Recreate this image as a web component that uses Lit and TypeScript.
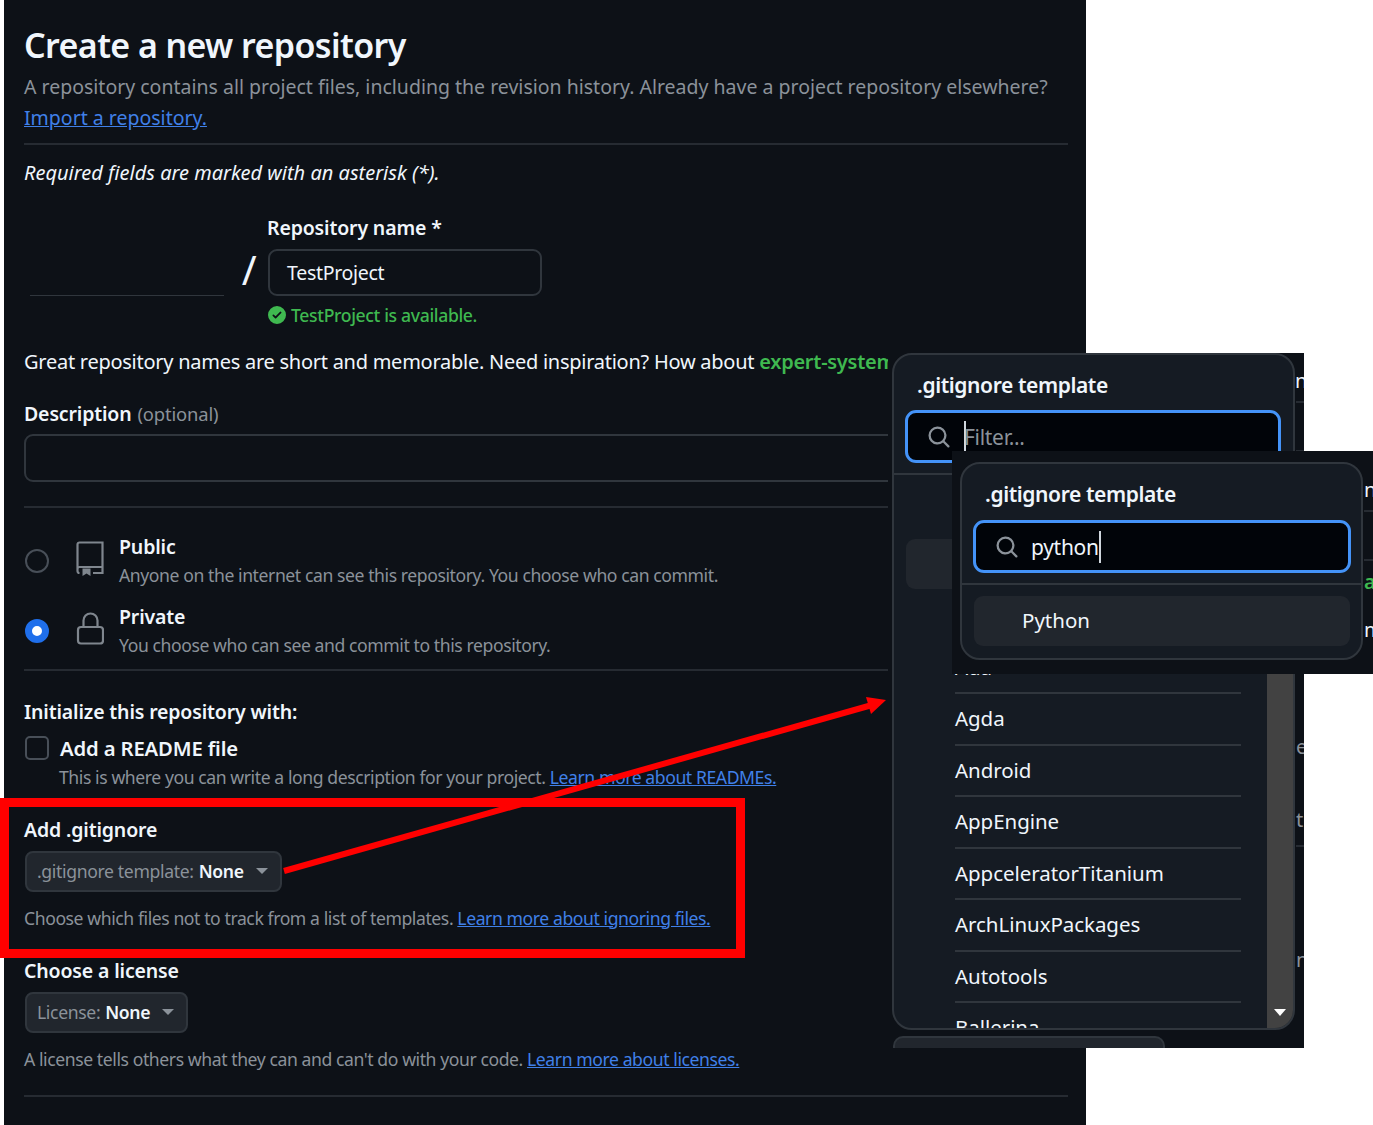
import { LitElement, html, css, svg } from "lit";
import { customElement } from "lit/decorators.js";

const searchIcon = html`<svg class="search" viewBox="0 0 16 16"><path fill="currentColor" d="M10.68 11.74a6 6 0 0 1-7.922-8.982 6 6 0 0 1 8.982 7.922l3.04 3.04a.749.749 0 0 1-.326 1.275.749.749 0 0 1-.734-.215ZM11.5 7a4.499 4.499 0 1 0-8.997 0A4.499 4.499 0 0 0 11.5 7Z"/></svg>`;
const items = ["", "", "Ada", "Agda", "Android", "AppEngine", "AppceleratorTitanium", "ArchLinuxPackages", "Autotools", "Ballerina"];

@customElement("app-root")
export class AppRoot extends LitElement {
  static styles = css`
    :host { display: block; position: relative; width: 1373px; height: 1125px; overflow: hidden; background: #fff;
      font-family: "Noto Sans", "Open Sans", sans-serif; color: #f0f6fc; font-size: 19px; letter-spacing: -0.35px; }
    * { box-sizing: border-box; }
    a { color: #4080e8; text-decoration: underline; }
    .main { margin-left: 4px; width: 1082px; height: 1125px; background: #0d1117; padding: 25px 18px 0 20px; overflow: hidden; }
    h1 { margin: 0; font-size: 34px; line-height: 40px; font-weight: 600; letter-spacing: -0.6px; }
    .lead { margin: 5.5px 0 0; font-size: 19.5px; line-height: 31px; color: #8b929a; white-space: nowrap; letter-spacing: 0; }
    hr { border: 0; height: 2px; background: #262b32; margin: 0; }
    .req { margin: 14px 0 0; line-height: 28px; font-style: italic; font-size: 20px; letter-spacing: 0; }
    .label { font-weight: 600; line-height: 24px; font-size: 19.5px; letter-spacing: -0.15px; white-space: nowrap; }
    .muted { color: #8b929a; }
    .small { font-size: 17.6px; line-height: 24px; white-space: nowrap; letter-spacing: -0.42px; }
    .opt { font-weight: 400; font-size: 18.4px; color: #8b929a; margin-left: 1px; }
    .repo { display: flex; margin-top: 29px; }
    .owner { width: 194px; margin-left: 6px; height: 80px; border-bottom: 1px solid #30363d; }
    .slash { width: 44px; height: 80px; padding: 29px 0 0 6px; text-align: center; font-size: 40px; line-height: 50px; font-weight: 400; }
    .name { width: 274px; }
    .name .label { margin-left: -1px; }
    .name-input { margin-top: 9px; height: 47px; border: 2px solid #30363d; border-radius: 9px; padding: 0 17px; line-height: 43px; font-size: 19.5px; letter-spacing: -0.3px; }
    .avail { display: flex; align-items: center; gap: 5px; margin: 7px 0 0 244px; color: #3fb950; font-weight: 500; font-size: 17.6px; line-height: 24px; }
    .avail svg { width: 18px; height: 18px; }
    .great { margin: 21px 0 0; line-height: 28px; white-space: nowrap; font-size: 20px; letter-spacing: -0.26px; }
    .great b { color: #3fb950; font-weight: 600; }
    .desc-label { margin-top: 26px; }
    .desc-input { margin-top: 8px; height: 48px; border: 2px solid #30363d; border-radius: 9px; }
    .rule-a { margin-top: 24px; }
    .vis { display: grid; grid-template-columns: 24px 28px 1fr; column-gap: 28px; }
    .vis.first { margin-top: 27px; }
    .vis.second { margin-top: 18px; }
    .vis > .col { margin-left: -13px; }
    .vis .sub { margin-top: 4px; }
    .radio { width: 24px; height: 24px; border-radius: 50%; border: 2px solid #484f58; margin: 14px 0 0 1px; }
    .radio.on { border: 7px solid #1f6feb; background: #fff; }
    .vicon { width: 28px; height: 36px; margin: 6px 0 0 0; color: #7f868e; }
    .rule-b { margin-top: 12px; }
    .init { margin-top: 29px; }
    .check { display: flex; align-items: center; gap: 11px; margin-top: 12px; }
    .check .label { font-size: 20.3px; }
    .box { width: 24px; height: 24px; margin-left: 1px; border: 2px solid #484f58; border-radius: 5px; }
    .readme-sub { margin: 5px 0 0 35px; }
    .sec { margin-top: 29px; }
    .sec-b { margin-top: 29px; }
    .btn { display: inline-flex; align-items: center; height: 41px; margin-top: 9px; margin-left: 1px; padding: 0 12px 0 10px; background: #21262d; border: 2px solid #30363d; border-radius: 8px; font-size: 17.6px; color: #8b929a; white-space: nowrap; }
    .btn b { color: #f0f6fc; font-weight: 600; margin-left: 5px; }
    .caret { width: 0; height: 0; border: 6px solid transparent; border-top: 6px solid #8b929a; border-bottom: 0; margin-left: 12px; }
    .note { margin-top: 14px; }
    .license-note { margin-top: 14px; }
    .rule-c { margin-top: 24px; }

    .redbox { position: absolute; left: 0; top: 798px; width: 745px; height: 160px; border: 9px solid #ff0000; }
    .arrow { position: absolute; left: 0; top: 0; width: 1373px; height: 1125px; pointer-events: none; }

    .shot { position: absolute; background: #0d1117; overflow: hidden; }
    .shot.one { left: 888px; top: 353px; width: 416px; height: 695px; }
    .shot.two { left: 952px; top: 451px; width: 421px; height: 223px; }
    .panel { position: absolute; background: #151b23; border: 2px solid #30363d; border-radius: 20px; overflow: hidden; display: flex; flex-direction: column; }
    .one .panel { left: 4px; top: 0; width: 403px; height: 677px; }
    .two .panel { left: 8px; top: 11px; width: 403px; height: 198px; }
    .title { font-weight: 600; font-size: 21px; line-height: 28px; padding-left: 23px; margin-top: 16px; letter-spacing: -0.4px; }
    .filter { display: flex; align-items: center; flex: none; height: 53px; margin: 11px 12px 0 11px; background: #010409; border: 3px solid #4493f8; border-radius: 11px; color: #8b929a; font-size: 21px; letter-spacing: -0.3px; padding-left: 19px; }
    .two .filter { margin: 12px 10px 0 11px; }
    .search { width: 24px; height: 24px; flex: none; color: #8b929a; }
    .cursor { width: 2px; height: 32px; background: #d0d7de; flex: none; }
    .one .cursor { margin-left: 13px; margin-right: -2px; }
    .typed { color: #f0f6fc; margin-left: 12px; }
    .divider { flex: none; height: 2px; background: #30363d; margin-top: 10px; }
    .list { list-style: none; margin: 0; padding: 64px 0 0 12px; flex: 1; min-height: 0; overflow: hidden; }
    .list li { height: 51.5px; padding-left: 50px; }
    .list li span { display: block; height: 51.5px; width: 286px; margin-left: -1px; line-height: 49.5px; font-size: 20.5px; letter-spacing: -0.05px; border-bottom: 2px solid #30363d; white-space: nowrap; }
    .list li.sel { background: #21262d; border-radius: 9px; height: 50px; width: 378px; margin-bottom: 2px; }
    .list li.sel span { border: 0; }
    .scroll { position: absolute; right: 0; top: 120px; bottom: 0; width: 26px; background: #424242; }
    .scroll i { position: absolute; left: 7px; bottom: 12px; width: 0; height: 0; border: 6px solid transparent; border-top: 7px solid #fff; border-bottom: 0; }
    .result { flex: none; margin: 11px 11px 0 12px; height: 50px; background: #21262d; border-radius: 9px; padding-left: 48px; line-height: 48px; font-size: 20.5px; letter-spacing: 0; }
    .tail { position: absolute; left: 5px; top: 683px; width: 272px; height: 30px; background: #21262d; border: 2px solid #30363d; border-radius: 10px; }
    .bit { position: absolute; font-size: 20px; color: #f0f6fc; line-height: 24px; }
    .bit.dim { color: #8b929a; }
    .bit.green { color: #3fb950; font-weight: 600; }
    .line { position: absolute; height: 2px; background: #262b32; width: 20px; }
  `;

  render() {
    return html`
      <div class="main">
        <h1>Create a new repository</h1>
        <p class="lead">A repository contains all project files, including the revision history. Already have a project repository elsewhere?<br /><a href="#">Import a repository.</a></p>
        <hr style="margin-top:10px" />
        <p class="req">Required fields are marked with an asterisk (*).</p>
        <div class="repo">
          <div class="owner"></div>
          <div class="slash">/</div>
          <div class="name">
            <div class="label">Repository name *</div>
            <div class="name-input">TestProject</div>
          </div>
        </div>
        <div class="avail">
          <svg viewBox="0 0 16 16"><path fill="currentColor" d="M8 16A8 8 0 1 1 8 0a8 8 0 0 1 0 16Zm3.78-9.72a.751.751 0 0 0-.018-1.042.751.751 0 0 0-1.042-.018L6.75 9.19 5.28 7.72a.751.751 0 0 0-1.042.018.751.751 0 0 0-.018 1.042l2 2a.75.75 0 0 0 1.06 0Z"/></svg>
          TestProject is available.
        </div>
        <p class="great">Great repository names are short and memorable. Need inspiration? How about <b>expert-system</b></p>
        <div class="label desc-label">Description <span class="opt">(optional)</span></div>
        <div class="desc-input"></div>
        <hr class="rule-a" />
        <div class="vis first">
          <div class="radio"></div>
          <svg class="vicon" viewBox="0 0 28 36" fill="none" stroke="currentColor" stroke-width="2.2">
            <path d="M3.500 32A2 2 0 0 1 1.500 30V3.500a2 2 0 0 1 2-2H26.500V32H17M1.500 28a2 2 0 0 1 2-2H26.500"/>
            <path fill="currentColor" stroke="none" d="M6.500 27.500h8V35l-4-2.500-4 2.500Z"/>
          </svg>
          <div class="col">
            <div class="label">Public</div>
            <div class="small muted sub">Anyone on the internet can see this repository. You choose who can commit.</div>
          </div>
        </div>
        <div class="vis second">
          <div class="radio on"></div>
          <svg class="vicon" viewBox="0 0 28 36" fill="none" stroke="currentColor" stroke-width="2.2">
            <rect x="2" y="16" width="25" height="16.500" rx="3"/>
            <path d="M7.500 16V9.500a7 7 0 0 1 14 0V16"/>
          </svg>
          <div class="col">
            <div class="label">Private</div>
            <div class="small muted sub">You choose who can see and commit to this repository.</div>
          </div>
        </div>
        <hr class="rule-b" />
        <div class="label init">Initialize this repository with:</div>
        <div class="check"><div class="box"></div><div class="label">Add a README file</div></div>
        <div class="small muted readme-sub">This is where you can write a long description for your project. <a href="#">Learn more about READMEs.</a></div>
        <div class="label sec">Add .gitignore</div>
        <div class="btn">.gitignore template:<b>None</b><span class="caret"></span></div>
        <div class="small muted note">Choose which files not to track from a list of templates. <a href="#">Learn more about ignoring files.</a></div>
        <div class="label sec-b">Choose a license</div>
        <div class="btn">License:<b>None</b><span class="caret"></span></div>
        <div class="small muted license-note">A license tells others what they can and can't do with your code. <a href="#">Learn more about licenses.</a></div>
        <hr class="rule-c" />
      </div>

      <div class="redbox"></div>

      <div class="shot one">
        <div class="tail"></div>
        <span class="bit" style="left:407px;top:16px">n</span>
        <span class="bit dim" style="left:408px;top:382px">e</span>
        <span class="bit dim" style="left:408px;top:455px">t</span>
        <span class="bit dim" style="left:408px;top:595px">n</span>
        <div class="line" style="left:408px;top:48px"></div>
        <div class="line" style="left:408px;top:97px"></div>
        <div class="line" style="left:408px;top:492px"></div>
        <div class="panel">
          <div class="title">.gitignore template</div>
          <div class="filter">${searchIcon}<span class="cursor"></span><span>Filter...</span></div>
          <div class="divider"></div>
          <ul class="list">
            ${items.map((t, i) => html`<li class=${i === 0 ? "sel" : ""}><span>${t}</span></li>`)}
          </ul>
          <div class="scroll"><i></i></div>
        </div>
      </div>

      <div class="shot two">
        <span class="bit" style="left:412px;top:27px">n</span>
        <span class="bit green" style="left:412px;top:119px">av</span>
        <span class="bit" style="left:412px;top:167px">m</span>
        <div class="line" style="left:412px;top:59px"></div>
        <div class="line" style="left:412px;top:108px"></div>
        <div class="panel">
          <div class="title">.gitignore template</div>
          <div class="filter">${searchIcon}<span class="typed">python</span><span class="cursor"></span></div>
          <div class="divider"></div>
          <div class="result">Python</div>
        </div>
      </div>

      <svg class="arrow" viewBox="0 0 1373 1125">
        ${svg`<path d="M284 871 L872 705" stroke="#ff0000" stroke-width="6" fill="none"/><path d="M886 700 L866 697 L871 714 Z" fill="#ff0000"/>`}
      </svg>
    `;
  }
}
